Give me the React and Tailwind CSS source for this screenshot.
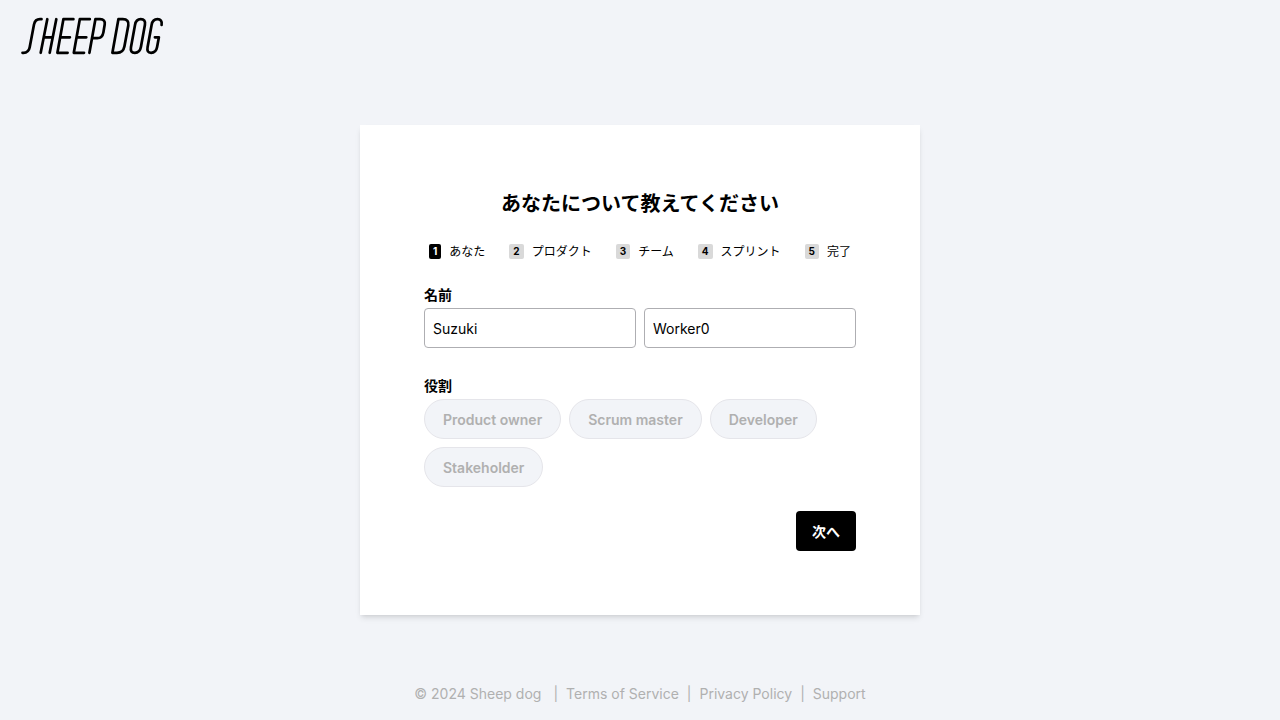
import React, { useState } from 'react';

const steps = ['あなた', 'プロダクト', 'チーム', 'スプリント', '完了'];

const roles = ['Product owner', 'Scrum master', 'Developer', 'Stakeholder'];

const links = [
  { label: 'Terms of Service', href: '#terms' },
  { label: 'Privacy Policy', href: '#privacy' },
  { label: 'Support', href: '#support' }
];

function Logo() {
  return (
    <svg
      width="144"
      height="40"
      viewBox="0 0 144 40"
      fill="none"
      stroke="currentColor"
      strokeWidth="2.7"
      strokeLinecap="round"
      strokeLinejoin="round"
      role="img"
      aria-label="Sheep dog"
    >
      <path d="M2.5 36.8H3.5C7 36.8 9 35 9.7 31.3L14 8.5C14.8 4.8 16.8 3.2 20 3.2H21.5" />
      <path d="M27.3 3.2L20.7 36.8M36.3 3.2L29.7 36.8M23.9 21.3H32.7" />
      <path d="M53.4 3.2H43.4L37.4 36.8H47.6M40.2 21.3H49.9" />
      <path d="M69.8 3.2H59.8L53.8 36.8H64M56.6 21.3H66.3" />
      <path d="M69.4 36.8L75.4 3.2H80C83.7 3.2 85.3 5 84.7 8.5L83.4 16.4C82.8 20 80.8 22.2 77.3 22.2H72.6" />
      <path d="M98.4 3.2H102.8C107.2 3.2 109 5.5 108.3 9.5L104.4 30.5C103.6 34.6 101.2 36.8 97 36.8H92.4Z" />
      <path d="M115 8.9C115.7 5 117.7 3.2 120.7 3.2C124.1 3.2 125.6 5 124.9 8.9L120.9 31.1C120.2 35 118.1 36.8 114.9 36.8C111.5 36.8 110.3 35 111 31.1Z" />
      <path d="M141.6 8.9C142.3 5 140.5 3.2 137.5 3.2C134.3 3.2 132.3 5 131.6 8.9L127.6 31.1C126.9 35 127.9 36.8 131.1 36.8C134.3 36.8 136.4 35 137.1 31.1L138.9 21.3H134.9" />
    </svg>
  );
}

export default function App() {
  const [familyName, setFamilyName] = useState('Suzuki');
  const [givenName, setGivenName] = useState('Worker0');

  return (
    <div className="flex min-h-screen flex-col bg-[#f2f4f8] font-['Inter','Noto_Sans_CJK_JP',sans-serif] text-sm text-black">
      <header className="flex px-5 py-4">
        <a href="#top">
          <Logo />
        </a>
      </header>

      <main className="flex flex-1 items-center justify-center">
        <div className="w-full max-w-[560px] bg-white p-16 shadow-md">
          <h1 className="text-center text-xl leading-[30px] font-bold">あなたについて教えてください</h1>

          <ol className="mt-[22px] flex justify-center gap-6">
            {steps.map((step, index) => (
              <li key={step} className="flex h-5 items-center gap-2 text-xs leading-[17px]">
                <span
                  className={`rounded-xs px-1 text-[10px] leading-[15px] font-bold ${
                    index === 0 ? 'bg-black text-white' : 'bg-[#d9d9d9]'
                  }`}
                >
                  {index + 1}
                </span>
                {step}
              </li>
            ))}
          </ol>

          <form className="mt-5" onSubmit={(event) => event.preventDefault()}>
            <label htmlFor="family-name" className="block leading-[27px] font-bold">
              名前
            </label>
            <div className="flex gap-2">
              <input
                id="family-name"
                type="text"
                value={familyName}
                onChange={(event) => setFamilyName(event.target.value)}
                className="h-10 min-w-0 flex-1 rounded border border-[#aeaeb2] px-2"
              />
              <input
                type="text"
                aria-label="名前"
                value={givenName}
                onChange={(event) => setGivenName(event.target.value)}
                className="h-10 min-w-0 flex-1 rounded border border-[#aeaeb2] px-2"
              />
            </div>

            <div id="role-label" className="mt-6 leading-[27px] font-bold">
              役割
            </div>
            <div role="group" aria-labelledby="role-label" className="flex flex-wrap gap-2">
              {roles.map((role) => (
                <button
                  key={role}
                  type="button"
                  className="h-10 rounded-full border border-[#e5e5ea] bg-[#f2f4f8] px-[18px] leading-[21px] font-semibold text-[#b0b0b0]"
                >
                  {role}
                </button>
              ))}
            </div>

            <div className="mt-6 flex justify-end">
              <button type="submit" className="h-10 rounded bg-black px-4 leading-[21px] font-bold text-white">
                次へ
              </button>
            </div>
          </form>
        </div>
      </main>

      <footer className="flex items-center justify-center gap-2 py-4 text-[#b0b0b0]">
        <small className="mr-1 text-sm">© 2024 Sheep dog</small>
        {links.map(({ label, href }) => (
          <React.Fragment key={label}>
            <span>|</span>
            <a href={href}>{label}</a>
          </React.Fragment>
        ))}
      </footer>
    </div>
  );
}
